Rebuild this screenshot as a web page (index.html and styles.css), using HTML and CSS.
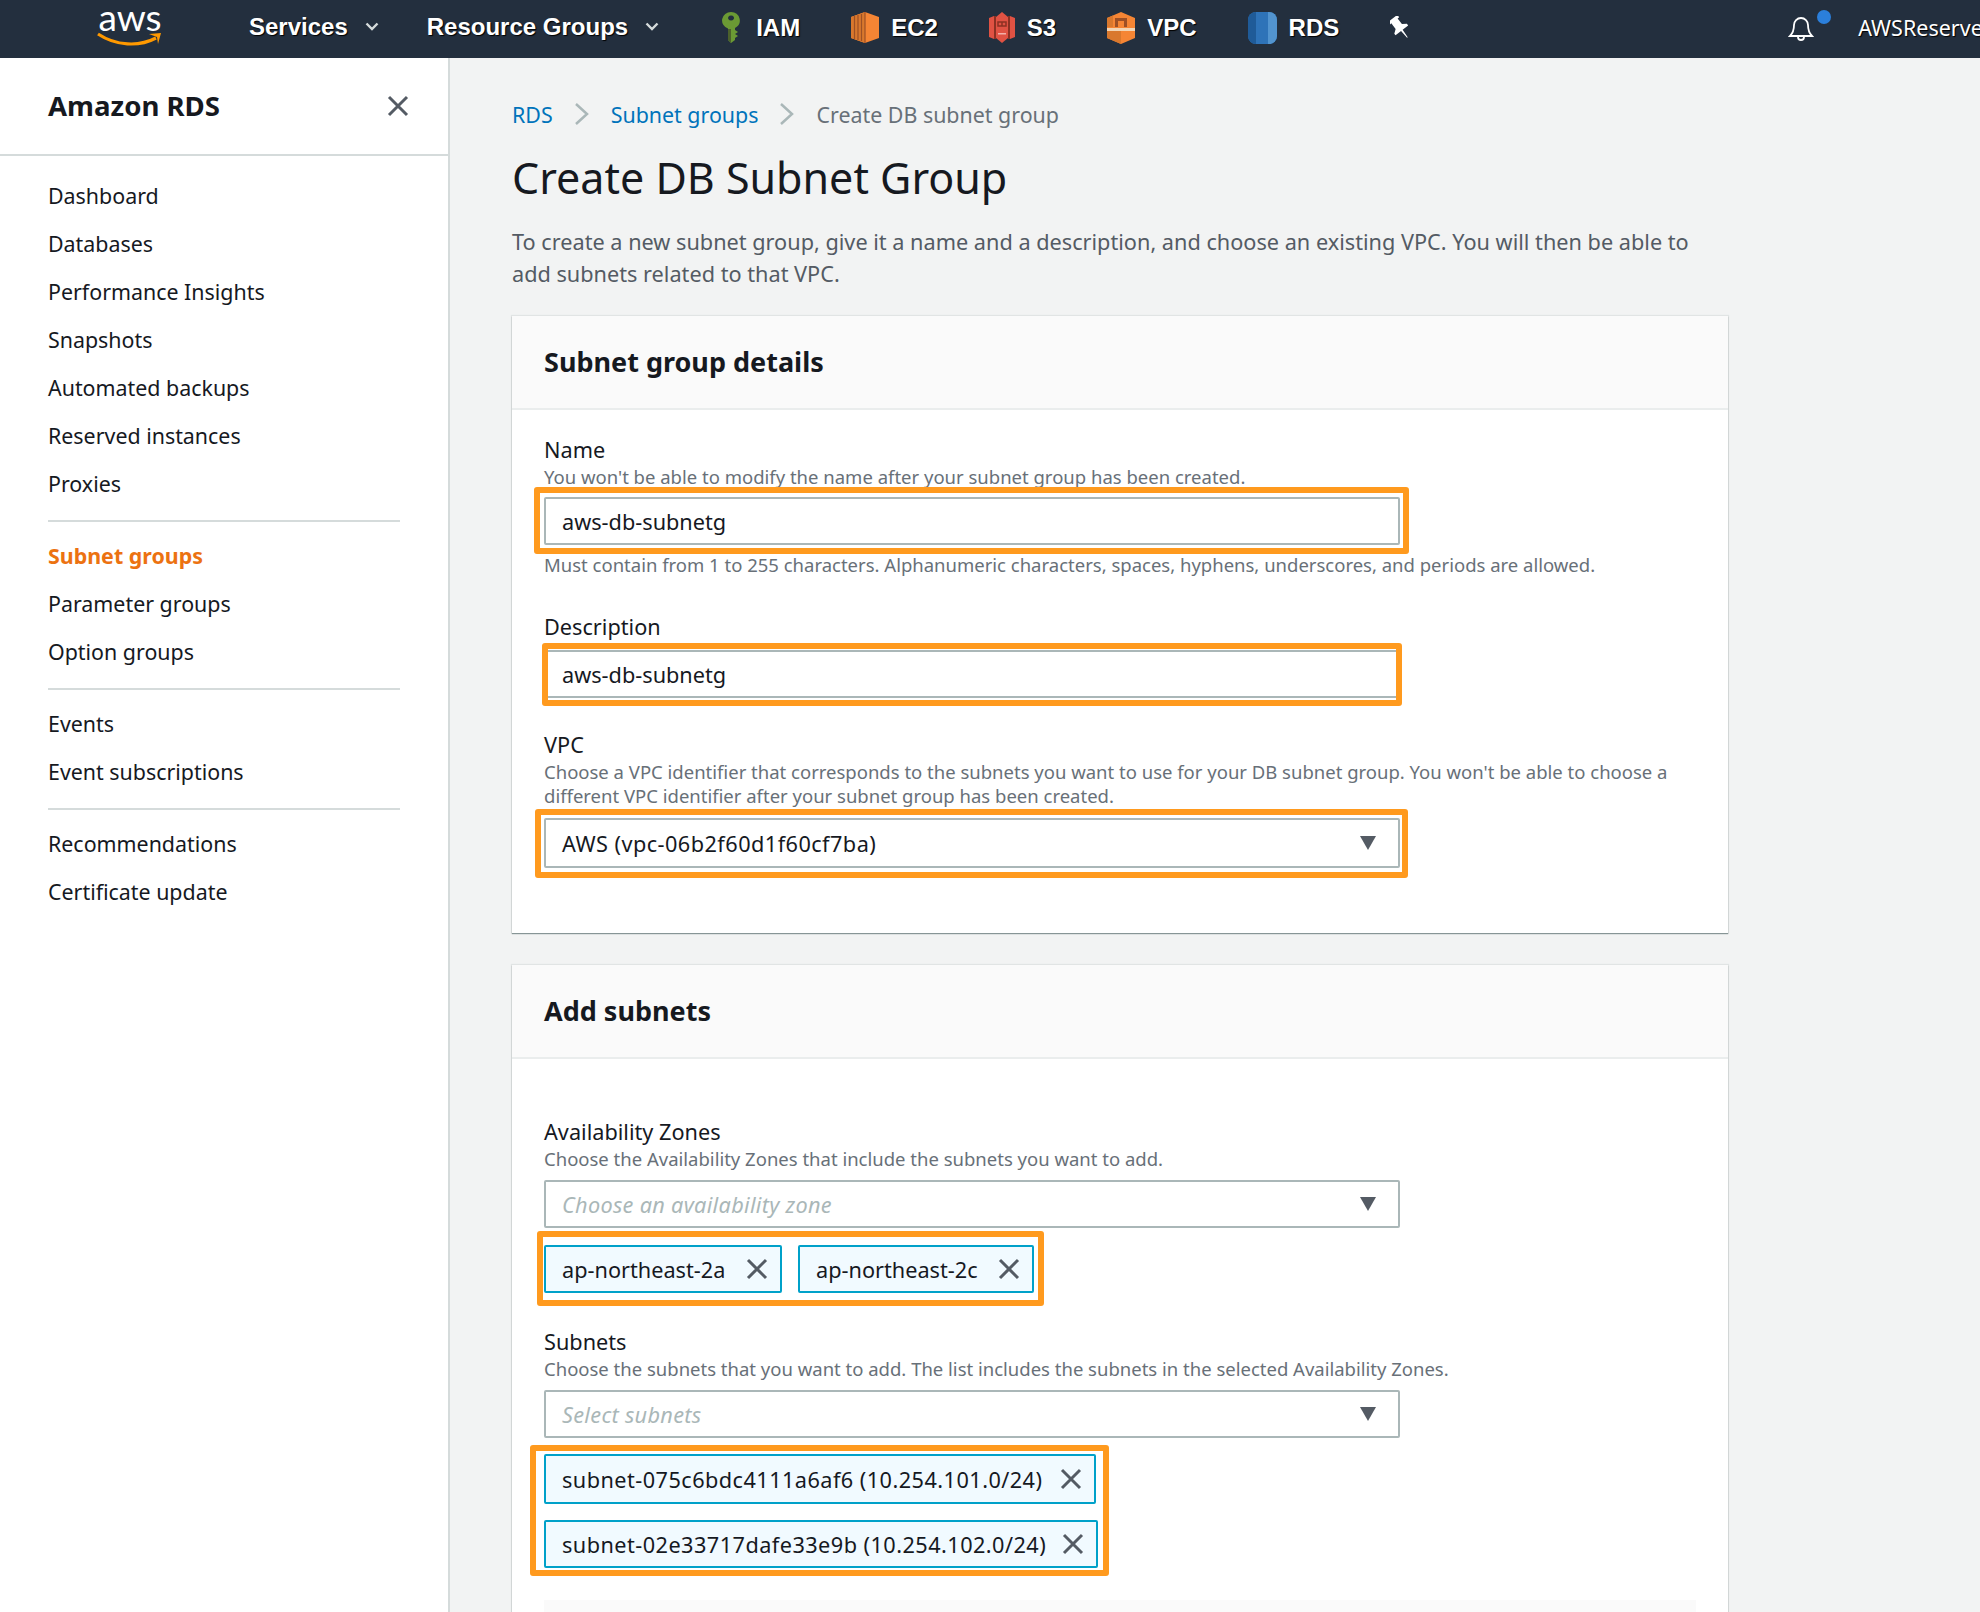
FILE: index.html
```html
<!DOCTYPE html>
<html lang="en">
<head>
	<meta charset="UTF-8">
	<title>Create DB Subnet Group</title>
	<link rel="stylesheet" href="styles.css">
</head>
<body>
	<header class="topbar">
		<div class="logo">
			<span class="logo_text">aws</span>
			<svg class="logo_smile" width="66" height="16" viewBox="0 0 66 16"><path d="M1 2c18 12 41 13 58 4" fill="none" stroke="#ff9900" stroke-width="3.200"/><path d="M52 2l12-1-3 11-1-7z" fill="#ff9900"/></svg>
		</div>
		<div class="menu menu_services">Services <svg class="caret" width="14" height="9" viewBox="0 0 14 9"><path d="M1.500 1.500 7 7l5.500-5.500" fill="none" stroke="#d5dbdb" stroke-width="2.400"/></svg></div>
		<div class="menu menu_groups">Resource Groups <svg class="caret" width="14" height="9" viewBox="0 0 14 9"><path d="M1.500 1.500 7 7l5.500-5.500" fill="none" stroke="#d5dbdb" stroke-width="2.400"/></svg></div>
		<div class="svc svc_first">
			<svg width="18" height="31" viewBox="0 0 18 31"><path d="M9 0a9 8.500 0 0 1 4 16v2l3 2-3 2 3 2-3 2v2l-4 3-3-3V16.500A9 8.500 0 0 1 9 0z" fill="#6b9a34"/><path d="M9 3.500a3 2.500 0 1 0 .1 0z" fill="#232f3e"/><path d="M6 17h3v14l-3-3z" fill="#4b612c"/></svg>
			IAM
		</div>
		<div class="svc">
			<svg width="28" height="31" viewBox="0 0 28 31"><path d="M14 0l14 5v21l-14 5-14-5V5z" fill="#f58534"/><path d="M0 5l14-5v31L0 26z" fill="#d9782d"/><path d="M3.500 4v23M7 3v25M10.500 2v27M14 0v31" stroke="#9d5025" stroke-width="1.200"/></svg>
			EC2
		</div>
		<div class="svc">
			<svg width="26" height="31" viewBox="0 0 26 31"><path d="M0 6l5-2v23l-5-2zM26 6l-5-2v23l5-2z" fill="#e05243"/><path d="M5 4h2v23H5zM19 4h2v23h-2z" fill="#8c3123"/><path d="M7 5l6-5 6 5v21l-6 5-6-5z" fill="#e05243"/><path d="M9 10h8v4H9zM13 10v4" fill="none" stroke="#8c3123" stroke-width="1.500"/><path d="M9 21h8v1.500H9z" fill="#f2b0a9"/></svg>
			S3
		</div>
		<div class="svc">
			<svg width="28" height="32" viewBox="0 0 28 32"><path d="M14 0l14 6v20l-14 6-14-6V6z" fill="#f58534"/><path d="M0 6l6-2.500V15H0z" fill="#d9782d"/><path d="M8 6h12v9h-3V9h-6v6H8z" fill="#9d5025"/><path d="M0 16h28v3H0z" fill="#f2d5b4"/><path d="M14 19v13L0 26v-7z" fill="#d9782d"/></svg>
			VPC
		</div>
		<div class="svc">
			<svg width="29" height="32" viewBox="0 0 29 32"><rect width="29" height="32" rx="8" fill="#2e73b8"/><path d="M8 0v32a8 8 0 0 1-8-8V8a8 8 0 0 1 8-8z" fill="#1f5b98"/><path d="M20 0h1a8 8 0 0 1 8 8v16a8 8 0 0 1-8 8h-1z" fill="#5294cf"/></svg>
			RDS
		</div>
		<div class="svc">
			<svg width="20" height="24" viewBox="0 0 20 24"><path transform="rotate(-38 10 12)" d="M4 0h12v3h-2v7l4 3v2H11l-.6 9h-.8L9 15H2v-2l4-3V3H4z" fill="#fff"/></svg>
		</div>
		<div class="bell">
			<svg width="26" height="26" viewBox="0 0 26 26"><path d="M2 21c3-3 4-6 4-11a7 7 0 0 1 14 0c0 5 1 8 4 11zM10 22a3 3 0 0 0 6 0" fill="none" stroke="#fff" stroke-width="1.800"/></svg>
			<span class="bell_dot"></span>
		</div>
		<div class="account">AWSReserve</div>
	</header>

	<div class="shell">
		<nav class="sidebar">
			<div class="side_head">
				<h2>Amazon RDS</h2>
				<svg width="22" height="22" viewBox="0 0 22 22"><path d="M2 2l18 18M20 2 2 20" stroke="#545b64" stroke-width="3"/></svg>
			</div>
			<ul class="side_list">
				<li>Dashboard</li>
				<li>Databases</li>
				<li>Performance Insights</li>
				<li>Snapshots</li>
				<li>Automated backups</li>
				<li>Reserved instances</li>
				<li>Proxies</li>
				<li class="side_line"></li>
				<li class="active">Subnet groups</li>
				<li>Parameter groups</li>
				<li>Option groups</li>
				<li class="side_line"></li>
				<li>Events</li>
				<li>Event subscriptions</li>
				<li class="side_line"></li>
				<li>Recommendations</li>
				<li>Certificate update</li>
			</ul>
		</nav>

		<main class="content">
			<div class="crumbs">
				<a>RDS</a>
				<svg width="16" height="24" viewBox="0 0 16 24"><path d="M2 2l11 10L2 22" fill="none" stroke="#aab7b8" stroke-width="2.500"/></svg>
				<a>Subnet groups</a>
				<svg width="16" height="24" viewBox="0 0 16 24"><path d="M2 2l11 10L2 22" fill="none" stroke="#aab7b8" stroke-width="2.500"/></svg>
				<span>Create DB subnet group</span>
			</div>
			<h1>Create DB Subnet Group</h1>
			<p class="intro">To create a new subnet group, give it a name and a description, and choose an existing VPC. You will then be able to add subnets related to that VPC.</p>

			<section class="card card_details">
				<h3>Subnet group details</h3>
				<div class="card_body">
					<div class="label label_name">Name</div>
					<div class="help">You won't be able to modify the name after your subnet group has been created.</div>
					<div class="input mark_wrap input_name">aws-db-subnetg<i class="mark mark_name"></i></div>
					<div class="help help_after">Must contain from 1 to 255 characters. Alphanumeric characters, spaces, hyphens, underscores, and periods are allowed.</div>

					<div class="label label_desc">Description</div>
					<div class="input mark_wrap input_desc">aws-db-subnetg<i class="mark mark_desc"></i></div>

					<div class="label label_vpc">VPC</div>
					<div class="help">Choose a VPC identifier that corresponds to the subnets you want to use for your DB subnet group. You won't be able to choose a different VPC identifier after your subnet group has been created.</div>
					<div class="input select mark_wrap input_vpc"><span class="wide">AWS (vpc-06b2f60d1f60cf7ba)</span>
						<svg width="16" height="14" viewBox="0 0 16 14"><path d="M0 0h16L8 14z" fill="#545b64"/></svg>
						<i class="mark mark_vpc"></i>
					</div>
				</div>
			</section>

			<section class="card card_subnets">
				<h3>Add subnets</h3>
				<div class="card_body">
					<div class="label label_az">Availability Zones</div>
					<div class="help">Choose the Availability Zones that include the subnets you want to add.</div>
					<div class="input select placeholder input_pick">Choose an availability zone
						<svg width="16" height="14" viewBox="0 0 16 14"><path d="M0 0h16L8 14z" fill="#545b64"/></svg>
					</div>
					<div class="chips mark_wrap chips_az">
						<div class="chip chip_az1">ap-northeast-2a <svg width="22" height="22" viewBox="0 0 22 22"><path d="M2 2l18 18M20 2 2 20" stroke="#545b64" stroke-width="3"/></svg></div>
						<div class="chip chip_az2">ap-northeast-2c <svg width="22" height="22" viewBox="0 0 22 22"><path d="M2 2l18 18M20 2 2 20" stroke="#545b64" stroke-width="3"/></svg></div>
						<i class="mark mark_az"></i>
					</div>

					<div class="label label_subnets">Subnets</div>
					<div class="help">Choose the subnets that you want to add. The list includes the subnets in the selected Availability Zones.</div>
					<div class="input select placeholder input_pick input_subnets">Select subnets
						<svg width="16" height="14" viewBox="0 0 16 14"><path d="M0 0h16L8 14z" fill="#545b64"/></svg>
					</div>
					<div class="chips_col mark_wrap">
						<div class="chip chip_sub1"><span class="wide">subnet-075c6bdc4111a6af6 (10.254.101.0/24)</span> <svg width="22" height="22" viewBox="0 0 22 22"><path d="M2 2l18 18M20 2 2 20" stroke="#545b64" stroke-width="3"/></svg></div>
						<div class="chip chip_sub2"><span class="wide">subnet-02e33717dafe33e9b (10.254.102.0/24)</span> <svg width="22" height="22" viewBox="0 0 22 22"><path d="M2 2l18 18M20 2 2 20" stroke="#545b64" stroke-width="3"/></svg></div>
						<i class="mark mark_subnets"></i>
					</div>
					<div class="table_stub"></div>
				</div>
			</section>
		</main>
	</div>
</body>
</html>
```

FILE: styles.css
```css
html, body{
	margin: 0;
	height: 1612px;
	overflow: hidden;
}
body{
	font-family: "Noto Sans", "Open Sans", sans-serif;
	font-size: 21.7px;
	color: #16191f;
	background-color: #f2f3f3;
}

/* top bar */
.topbar{
	display: flex;
	align-items: center;
	box-sizing: border-box;
	height: 58px;
	background-color: #232f3e;
	color: white;
	font-family: "Liberation Sans", sans-serif;
	font-weight: bold;
	font-size: 24px;
	white-space: nowrap;
	overflow: hidden;
	padding: 0 0 3px 97px;
	text-shadow: 1px 1px 1px black;
}
.logo{
	align-self: flex-start;
	width: 67px;
	height: 58px;
}
.logo_text{
	display: block;
	font-family: "Lato", sans-serif;
	font-weight: normal;
	font-size: 37px;
	line-height: 33px;
	text-align: center;
	text-shadow: none;
}
.logo_smile{
	display: block;
	margin-top: -1px;
}
.menu{
	display: flex;
	align-items: center;
	gap: 17px;
	margin-bottom: 2px;
}
.menu_services{
	margin-left: 86px;
}
.menu_groups{
	margin-left: 48px;
}
.svc{
	display: flex;
	align-items: center;
	gap: 12px;
	margin-left: 51px;
}
.svc_first{
	gap: 16px;
	margin-left: 63px;
}
.bell{
	position: relative;
	margin-left: 378px;
	height: 26px;
}
.bell_dot{
	position: absolute;
	top: -5px;
	left: 29px;
	width: 14px;
	height: 14px;
	border-radius: 50%;
	background-color: #2b7fdb;
}
.account{
	margin-left: 44px;
	font-family: "Noto Sans", sans-serif;
	font-weight: normal;
	font-size: 21.5px;
}

/* layout */
.shell{
	display: flex;
	height: 1554px;
}
.sidebar{
	width: 448px;
	flex: none;
	background-color: white;
	border-right: 2px solid #d5dbdb;
	font-size: 21.4px;
}
.side_head{
	display: flex;
	justify-content: space-between;
	align-items: center;
	height: 96px;
	padding: 0 39px 0 48px;
	border-bottom: 2px solid #d5dbdb;
}
.side_head h2{
	margin: 0 0 2px;
	font-size: 27.600px;
	font-weight: bold;
}
.side_list{
	list-style: none;
	margin: 16px 0 0;
	padding: 0 48px;
	width: 352px;
}
.side_list li{
	height: 48px;
	line-height: 48px;
	white-space: nowrap;
}
.side_list .side_line{
	height: 0;
	margin: 12px 0 10px;
	border-top: 2px solid #d5dbdb;
}
.side_list .active{
	color: #ec7211;
	font-weight: bold;
}
.content{
	flex: 1;
	padding-left: 62px;
}

/* heading */
.crumbs{
	display: flex;
	align-items: center;
	gap: 21px;
	height: 32px;
	margin-top: 40px;
	color: #687078;
	font-size: 21.4px;
}
.crumbs a{
	color: #0073bb;
}
h1{
	margin: 20px 0 0;
	font-size: 43px;
	line-height: 56px;
	font-weight: normal;
}
.intro{
	width: 1200px;
	margin: 20px 0 0;
	line-height: 32px;
	color: #545b64;
}

/* cards */
.card{
	width: 1216px;
	background-color: white;
	box-shadow: 0 1px 1px 0 #879596, 0 0 1px 1px #e1e4e4;
}
.card_details{
	height: 617px;
	margin-top: 26px;
}
.card_subnets{
	height: 700px;
	margin-top: 32px;
}
.card h3{
	margin: 0;
	height: 92px;
	padding-left: 32px;
	line-height: 92px;
	font-size: 27px;
	font-weight: bold;
	background-color: #fafafa;
	border-bottom: 2px solid #eaeded;
}
.card_body{
	padding: 0 32px;
}
.label{
	height: 30px;
	line-height: 30px;
}
.label_name{
	margin-top: 25px;
}
.label_desc{
	margin-top: 35px;
}
.label_vpc{
	margin-top: 32px;
}
.label_az{
	margin-top: 58px;
}
.label_subnets{
	margin-top: 34px;
}
.help{
	font-size: 18.500px;
	line-height: 24px;
	color: #687078;
}
.help_after{
	margin-top: 8px;
}
.input{
	display: flex;
	justify-content: space-between;
	align-items: center;
	box-sizing: border-box;
	width: 856px;
	height: 48px;
	margin-top: 8px;
	padding: 0 22px 0 16px;
	background-color: white;
	border: 2px solid #aab7b8;
	border-radius: 2px;
}
.input_desc{
	width: 854px;
	margin-top: 8px;
}
.input_vpc{
	height: 50px;
	margin-top: 10px;
}
.input_pick{
	margin-top: 9px;
}
.placeholder{
	font-style: italic;
	color: #aab7b8;
	letter-spacing: 0.3px;
}
.wide{
	letter-spacing: 0.45px;
}
.chips{
	display: flex;
	gap: 16px;
	margin-top: 17px;
}
.chips_col{
	display: flex;
	flex-direction: column;
	gap: 16px;
	margin-top: 16px;
	width: 556px;
}
.chip{
	display: flex;
	justify-content: space-between;
	align-items: center;
	box-sizing: border-box;
	height: 48px;
	padding: 0 12px 0 16px;
	background-color: #f1faff;
	border: 2px solid #00a1c9;
	border-radius: 2px;
	white-space: nowrap;
}
.chip_az1{
	width: 238px;
}
.chip_az2{
	width: 236px;
}
.chip_sub1{
	width: 552px;
	height: 50px;
}
.chip_sub2{
	width: 554px;
}
.table_stub{
	height: 40px;
	margin-top: 32px;
	background-color: #fafafa;
	width: 1152px;
}

/* orange annotation frames drawn over the form */
.mark_wrap{
	position: relative;
}
.mark{
	position: absolute;
	border: 6px solid #ff9a1e;
	border-radius: 3px;
	pointer-events: none;
}
.mark_name{
	top: -12px;
	left: -12px;
	right: -11px;
	bottom: -11px;
}
.mark_desc{
	top: -9px;
	left: -4px;
	right: -6px;
	bottom: -10px;
}
.mark_vpc{
	top: -11px;
	left: -11px;
	right: -10px;
	bottom: -12px;
}
.mark_az{
	top: -14px;
	left: -7px;
	width: 495px;
	bottom: -13px;
}
.mark_subnets{
	top: -9px;
	left: -14px;
	right: -9px;
	bottom: -8px;
}
```
